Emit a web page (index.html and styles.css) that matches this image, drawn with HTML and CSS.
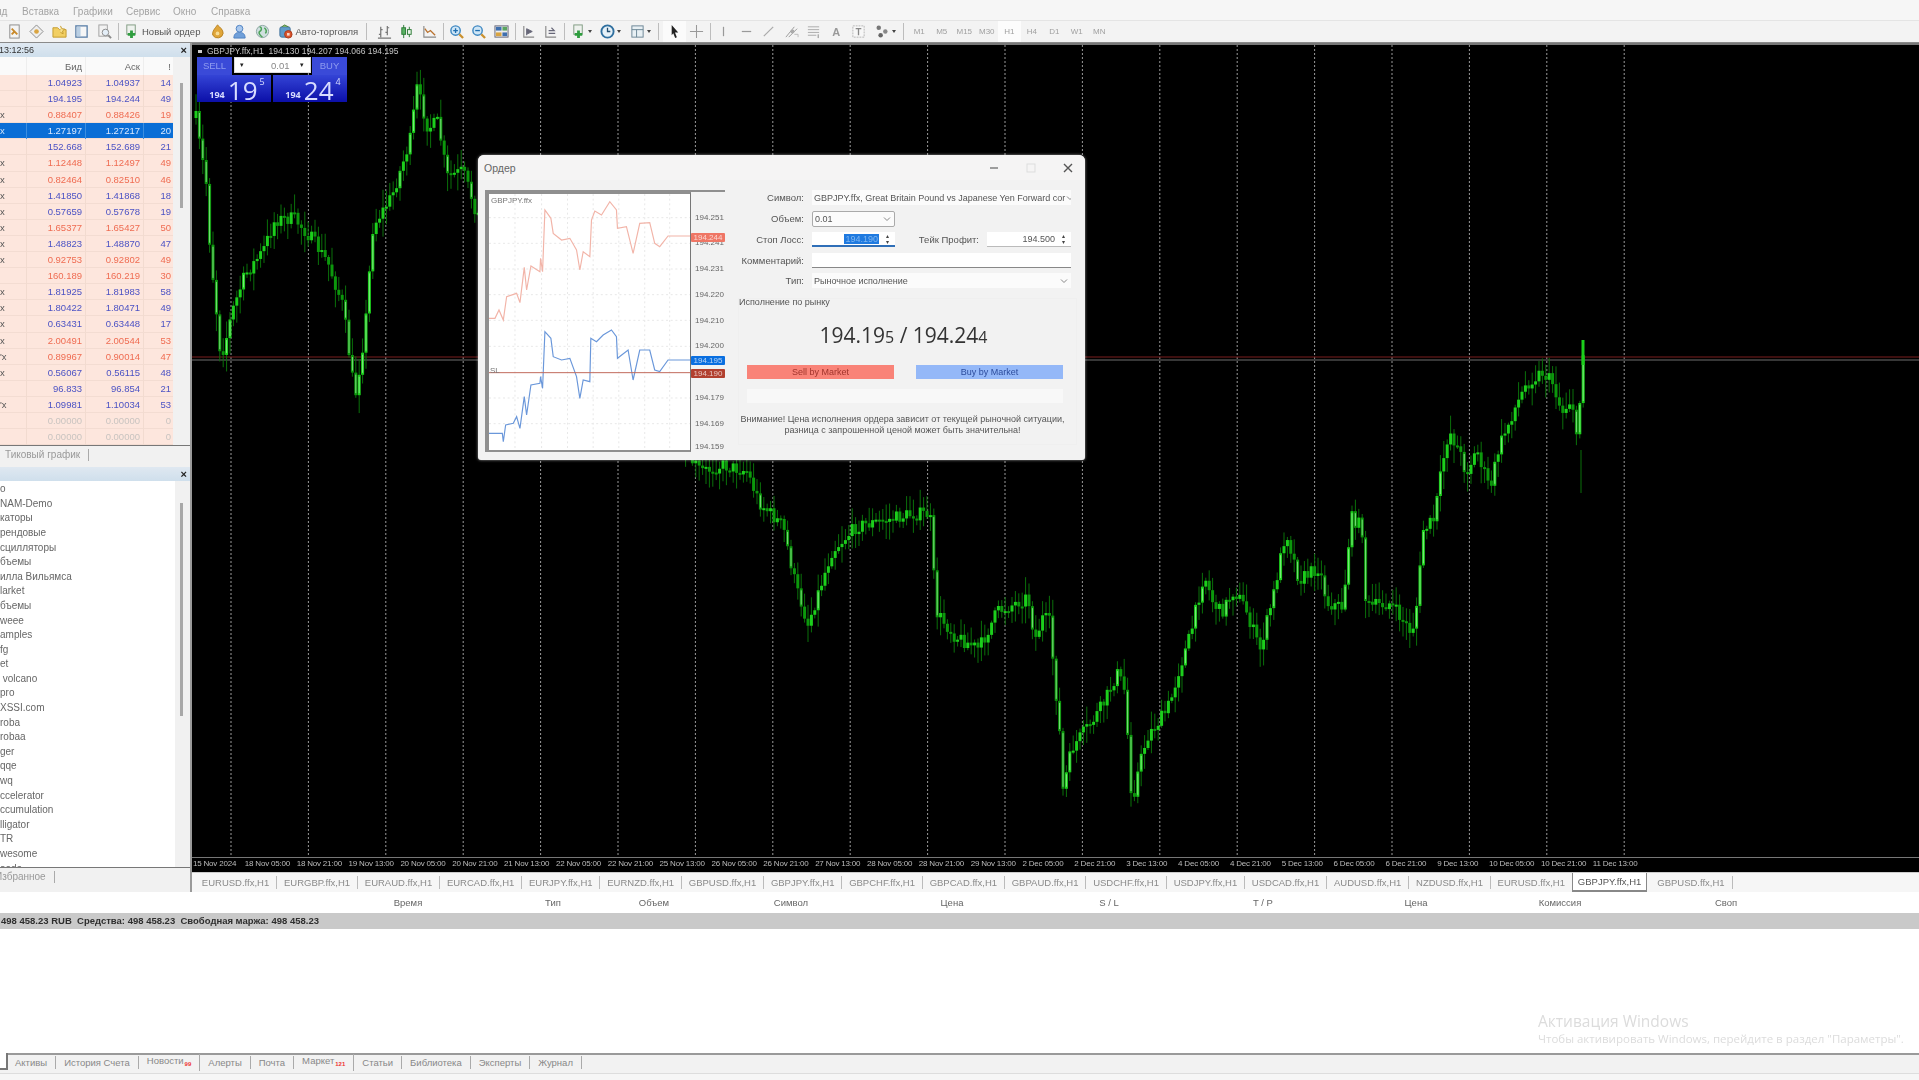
FILE: index.html
```html
<!DOCTYPE html>
<html>
<head>
    <title>MetaTrader 5</title>
    <meta charset="utf-8">
    <link rel="stylesheet" href="styles.css">
</head>
<body>
<div class="app">

<div class="menu">
    <span class="m0">ид</span><span class="m1">Вставка</span><span class="m2">Графики</span><span class="m3">Сервис</span><span class="m4">Окно</span><span class="m5">Справка</span>
</div>

<div class="toolbar">
    <div class="btn"><svg viewBox="0 0 16 16"><rect x="3" y="1" width="10" height="14" fill="#f4f4f4" stroke="#8a8a8a"/><path d="M5 5l6 6M5 11l3-3" stroke="#c98a2b" stroke-width="2"/></svg></div>
    <div class="btn"><svg viewBox="0 0 16 16"><path d="M8 1l7 7-7 7-7-7z" fill="#eee" stroke="#8a8a8a"/><circle cx="8" cy="8" r="2.5" fill="#d9a441"/></svg></div>
    <div class="btn"><svg viewBox="0 0 16 16"><path d="M1 4h5l2 2h7v8H1z" fill="#f2cf63" stroke="#c39a2c"/><path d="M9 2l1.5 3 3 .4-2.2 2 .6 3-2.9-1.5" fill="#f7e08e" stroke="#c39a2c"/></svg></div>
    <div class="btn"><svg viewBox="0 0 16 16"><rect x="2" y="2" width="12" height="12" fill="#f6f6f6" stroke="#5a7fa8" stroke-width="1.4"/><rect x="3" y="3" width="4" height="10" fill="#b9cfe4"/></svg></div>
    <div class="btn"><svg viewBox="0 0 16 16"><rect x="2" y="1" width="9" height="12" fill="#f2f2f2" stroke="#a0a0a0"/><circle cx="9" cy="9" r="3.5" fill="#e4eef7" stroke="#8a8a8a"/><path d="M12 12l3 3" stroke="#8a8a8a" stroke-width="2"/></svg></div>
    <div class="sep thin"></div>
    <div class="btn wide neworder"><svg viewBox="0 0 16 16"><rect x="3" y="1" width="9" height="10" fill="#eef2ee" stroke="#7f9a80"/><path d="M8 7v8M4 11h8" stroke="#2f9e3f" stroke-width="3"/></svg><span>Новый ордер</span></div>
    <div class="btn"><svg viewBox="0 0 16 16"><path d="M8 1c3 3 6 5 6 9a6 6 0 0 1-11 2C2 8 5 5 8 1z" fill="#e0a63a" stroke="#b57f1e"/><circle cx="8" cy="10" r="2" fill="#f6dc95"/></svg></div>
    <div class="btn"><svg viewBox="0 0 16 16"><circle cx="8" cy="5" r="3.6" fill="#a9c8ee" stroke="#4c7fc0"/><path d="M2 15c0-5 3-6 6-6s6 1 6 6z" fill="#6f9fd9" stroke="#4c7fc0"/></svg></div>
    <div class="btn"><svg viewBox="0 0 16 16"><circle cx="8" cy="8" r="6.5" fill="#cfe0df" stroke="#8aa3a0"/><path d="M5 3c3 1 2 4 0 5s1 5 3 6M10 4c2 2 3 4 1 6" fill="none" stroke="#4ea35a" stroke-width="1.6"/></svg></div>
    <div class="btn wide auto"><svg viewBox="0 0 16 16"><rect x="2" y="3" width="11" height="11" rx="2" fill="#5f9bc9" stroke="#3e6f99"/><path d="M4 3l3-2 4 2" fill="#78b05c" stroke="#4d7f3a"/><circle cx="11" cy="11" r="4" fill="#d9532c" stroke="#a83a1a"/><rect x="9.6" y="9.6" width="2.8" height="2.8" fill="#f6d5c8"/></svg><span>Авто-торговля</span></div>
    <div class="sep big"></div>
    <div class="btn"><svg viewBox="0 0 16 16"><path d="M4 3v11M2 11h2M4 6h2M11 2v10M9 9h2M11 4h2M1 15h14" fill="none" stroke="#777" stroke-width="1.3"/></svg></div>
    <div class="btn"><svg viewBox="0 0 16 16"><path d="M5 1v14M11 3v11" stroke="#2b7a35"/><rect x="3" y="4" width="4" height="7" fill="#58b163" stroke="#2b7a35"/><rect x="9" y="6" width="4" height="5" fill="#e8f4e8" stroke="#2b7a35"/></svg></div>
    <div class="btn"><svg viewBox="0 0 16 16"><path d="M2 2v12h13" fill="none" stroke="#888" stroke-width="1.2"/><path d="M3 5l3 4 3-2 5 5" fill="none" stroke="#b9722f" stroke-width="1.4"/></svg></div>
    <div class="sep thin"></div>
    <div class="btn"><svg viewBox="0 0 16 16"><circle cx="7" cy="7" r="5" fill="#cfe6f6" stroke="#3c86c0" stroke-width="1.5"/><path d="M4.5 7h5M7 4.5v5" stroke="#1f6eb0" stroke-width="1.4"/><path d="M11 11l4 4" stroke="#c9902e" stroke-width="2.4"/></svg></div>
    <div class="btn"><svg viewBox="0 0 16 16"><circle cx="7" cy="7" r="5" fill="#cfe6f6" stroke="#3c86c0" stroke-width="1.5"/><path d="M4.5 7h5" stroke="#1f6eb0" stroke-width="1.4"/><path d="M11 11l4 4" stroke="#c9902e" stroke-width="2.4"/></svg></div>
    <div class="btn"><svg viewBox="0 0 16 16"><rect x="1" y="2" width="14" height="12" fill="#eee" stroke="#667"/><rect x="2" y="3" width="6" height="4" fill="#3f6fae"/><rect x="9" y="3" width="5" height="4" fill="#5aa45f"/><rect x="2" y="9" width="6" height="4" fill="#d9a441"/><rect x="9" y="9" width="5" height="4" fill="#3f6fae"/></svg></div>
    <div class="sep thin"></div>
    <div class="btn"><svg viewBox="0 0 16 16"><path d="M3 2v12h11" fill="none" stroke="#888" stroke-width="1.2"/><path d="M6 5v7M6 5l6 3-6 3" fill="#667" stroke="#667"/></svg></div>
    <div class="btn"><svg viewBox="0 0 16 16"><path d="M3 2v12h11" fill="none" stroke="#888" stroke-width="1.2"/><path d="M6 7h5M6 10h7M9 4l3 3-3 0" fill="none" stroke="#667" stroke-width="1.2"/></svg></div>
    <div class="sep thin wider"></div>
    <div class="btn drop first"><svg viewBox="0 0 16 16"><rect x="3" y="1" width="9" height="10" fill="#eef2ee" stroke="#7f9a80"/><path d="M8 7v8M4 11h8" stroke="#2f9e3f" stroke-width="3"/></svg><i></i></div>
    <div class="btn drop"><svg viewBox="0 0 16 16"><circle cx="8" cy="8" r="6.5" fill="#e6f1f8" stroke="#2f6f9f" stroke-width="2"/><path d="M8 4v4h3" fill="none" stroke="#224e70" stroke-width="1.4"/></svg><i></i></div>
    <div class="btn drop"><svg viewBox="0 0 16 16"><rect x="2" y="2" width="12" height="12" fill="#e8f0f4" stroke="#6a8494"/><path d="M2 6h12M7 6v8" stroke="#6a8494"/></svg><i></i></div>
    <div class="sep"></div>
    <div class="btn on"><svg viewBox="0 0 16 16"><path d="M5 1l7 8H8.5l2 5-1.8.8-2-5L5 12z" fill="#222"/></svg></div>
    <div class="btn"><svg viewBox="0 0 16 16"><path d="M8 1v14M1 8h14" stroke="#999" stroke-width="1.1"/></svg></div>
    <div class="sep thin"></div>
    <div class="btn"><svg viewBox="0 0 16 16"><path d="M8 3v10" stroke="#999" stroke-width="1.3"/></svg></div>
    <div class="btn"><svg viewBox="0 0 16 16"><path d="M3 8h10" stroke="#999" stroke-width="1.3"/></svg></div>
    <div class="btn"><svg viewBox="0 0 16 16"><path d="M3 13L13 3" stroke="#aaa" stroke-width="1.3"/></svg></div>
    <div class="btn"><svg viewBox="0 0 16 16"><path d="M2 14l9-11M5 14l9-9" stroke="#999"/><circle cx="9" cy="8" r="2.2" fill="#aaa"/><path d="M11 11h4v3" stroke="#bbb" fill="none"/></svg></div>
    <div class="btn"><svg viewBox="0 0 16 16"><path d="M2 3h12M2 6h12M2 9h12M2 12h9" stroke="#aaa"/><path d="M13 11v4" stroke="#888"/></svg></div>
    <div class="btn txt">A</div>
    <div class="btn"><svg viewBox="0 0 16 16"><rect x="2" y="2" width="12" height="12" fill="#f7f7f7" stroke="#b5b5b5" stroke-dasharray="2 1"/><path d="M5 5h6M8 5v7" stroke="#888" stroke-width="1.4"/></svg></div>
    <div class="btn drop"><svg viewBox="0 0 16 16"><circle cx="4" cy="4" r="2.4" fill="#777"/><circle cx="11" cy="8" r="2.4" fill="#888"/><circle cx="6" cy="12" r="2.4" fill="#666"/></svg><i></i></div>
    <div class="sep"></div>
    <div class="tf">M1</div><div class="tf">M5</div><div class="tf">M15</div><div class="tf">M30</div><div class="tf on">H1</div><div class="tf">H4</div><div class="tf">D1</div><div class="tf">W1</div><div class="tf">MN</div>
</div>

<div class="main">
    <div class="side">
        <div class="panel-head"><span>13:12:56</span><b>×</b></div>
        <div class="watch">
            <div class="watch-row head"><span></span><span>Бид</span><span>Аск</span><span>!</span></div>
            <div class="watch-row blue"><span></span><span>1.04923</span><span>1.04937</span><span>14</span></div>
            <div class="watch-row blue"><span></span><span>194.195</span><span>194.244</span><span>49</span></div>
            <div class="watch-row red"><span>x</span><span>0.88407</span><span>0.88426</span><span>19</span></div>
            <div class="watch-row sel"><span>x</span><span>1.27197</span><span>1.27217</span><span>20</span></div>
            <div class="watch-row blue"><span></span><span>152.668</span><span>152.689</span><span>21</span></div>
            <div class="watch-row red"><span>x</span><span>1.12448</span><span>1.12497</span><span>49</span></div>
            <div class="watch-row red"><span>x</span><span>0.82464</span><span>0.82510</span><span>46</span></div>
            <div class="watch-row blue"><span>x</span><span>1.41850</span><span>1.41868</span><span>18</span></div>
            <div class="watch-row blue"><span>x</span><span>0.57659</span><span>0.57678</span><span>19</span></div>
            <div class="watch-row red"><span>x</span><span>1.65377</span><span>1.65427</span><span>50</span></div>
            <div class="watch-row blue"><span>x</span><span>1.48823</span><span>1.48870</span><span>47</span></div>
            <div class="watch-row red"><span>x</span><span>0.92753</span><span>0.92802</span><span>49</span></div>
            <div class="watch-row red"><span></span><span>160.189</span><span>160.219</span><span>30</span></div>
            <div class="watch-row blue"><span>x</span><span>1.81925</span><span>1.81983</span><span>58</span></div>
            <div class="watch-row blue"><span>x</span><span>1.80422</span><span>1.80471</span><span>49</span></div>
            <div class="watch-row blue"><span>x</span><span>0.63431</span><span>0.63448</span><span>17</span></div>
            <div class="watch-row red"><span>x</span><span>2.00491</span><span>2.00544</span><span>53</span></div>
            <div class="watch-row red"><span>'x</span><span>0.89967</span><span>0.90014</span><span>47</span></div>
            <div class="watch-row blue"><span>x</span><span>0.56067</span><span>0.56115</span><span>48</span></div>
            <div class="watch-row blue"><span></span><span>96.833</span><span>96.854</span><span>21</span></div>
            <div class="watch-row blue"><span>'x</span><span>1.09981</span><span>1.10034</span><span>53</span></div>
            <div class="watch-row none"><span></span><span>0.00000</span><span>0.00000</span><span>0</span></div>
            <div class="watch-row none"><span></span><span>0.00000</span><span>0.00000</span><span>0</span></div>
            <div class="watch-scroll"></div>
        </div>
        <div class="side-tabs"><span>Тиковый график</span></div>

        <div class="panel-head nav-head"><span></span><b>×</b></div>
        <div class="nav-wrap">
            <div class="nav-list">
                <div>o</div><div>NAM-Demo</div><div>каторы</div><div>рендовые</div><div>сцилляторы</div><div>бъемы</div><div>илла Вильямса</div><div>larket</div><div>бъемы</div><div>weee</div><div>amples</div><div>fg</div><div>et</div><div>&nbsp;volcano</div><div>pro</div><div>XSSI.com</div><div>roba</div><div>robaa</div><div>ger</div><div>qqe</div><div>wq</div><div>ccelerator</div><div>ccumulation</div><div>lligator</div><div>TR</div><div>wesome</div><div>aods</div>
            </div>
            <div class="nav-scroll"></div>
        </div>
        <div class="side-tabs low"><span>Избранное</span></div>
    </div>

    <div class="work">
        <div class="chart">
            <svg id="candles" class="chart-svg" viewBox="192 45 1727 812" preserveAspectRatio="none"></svg>
            <div class="chart-info">GBPJPY.ffx,H1&nbsp; 194.130 194.207 194.066 194.195</div>

            <div class="oneclick">
                <div class="oc-top">
                    <div class="oc-btn sell">SELL</div>
                    <div class="oc-vol"><i>▾</i><span>0.01</span><i>▾</i></div>
                    <div class="oc-btn buy">BUY</div>
                </div>
                <div class="oc-prices">
                    <div class="oc-price"><small>194</small><big>19</big><sup>5</sup></div>
                    <div class="oc-price"><small>194</small><big>24</big><sup>4</sup></div>
                </div>
            </div>

            <div class="axis">
                <span>15 Nov 2024</span><span>18 Nov 05:00</span><span>18 Nov 21:00</span><span>19 Nov 13:00</span><span>20 Nov 05:00</span><span>20 Nov 21:00</span><span>21 Nov 13:00</span><span>22 Nov 05:00</span><span>22 Nov 21:00</span><span>25 Nov 13:00</span><span>26 Nov 05:00</span><span>26 Nov 21:00</span><span>27 Nov 13:00</span><span>28 Nov 05:00</span><span>28 Nov 21:00</span><span>29 Nov 13:00</span><span>2 Dec 05:00</span><span>2 Dec 21:00</span><span>3 Dec 13:00</span><span>4 Dec 05:00</span><span>4 Dec 21:00</span><span>5 Dec 13:00</span><span>6 Dec 05:00</span><span>6 Dec 21:00</span><span>9 Dec 13:00</span><span>10 Dec 05:00</span><span>10 Dec 21:00</span><span>11 Dec 13:00</span>
            </div>

            <div class="dialog">
                <div class="dlg-title">
                    <span>Ордер</span>
                    <div class="dlg-ctrl">
                        <svg viewBox="0 0 12 12"><path d="M2 6h8" stroke="#777" stroke-width="1.4"/></svg>
                        <svg viewBox="0 0 12 12"><rect x="2" y="2" width="8" height="8" fill="none" stroke="#ddd"/></svg>
                        <svg viewBox="0 0 12 12"><path d="M2 2l8 8M10 2l-8 8" stroke="#555" stroke-width="1.4"/></svg>
                    </div>
                </div>
                <div class="dlg-body">
                    <div class="mini">
                        <div class="mini-frame">
                            <svg viewBox="42 132 604 768" preserveAspectRatio="none">
                                <path class="mini-grid" d="M120 132v768M200 132v768M278 132v768M355 132v768M432 132v768M510 132v768M585 132v768M42 203h604M42 280h604M42 357h604M42 434h604M42 511h604M42 589h604M42 744h604M42 821h604"/>
                                <polyline class="mini-ask" points="42,505 60,505 72,480 85,510 95,440 125,430 135,458 148,352 155,420 168,348 195,365 197,325 203,365 210,180 228,205 235,250 260,270 285,265 305,300 315,360 325,305 345,320 350,210 360,183 380,195 405,155 425,180 428,235 455,230 475,310 495,220 525,218 540,280 555,290 580,258 648,258"/>
                                <polyline class="mini-bid" points="40,850 82,850 85,875 92,825 115,820 125,800 135,835 148,740 155,795 168,705 195,700 197,680 203,715 210,545 228,565 235,620 260,630 285,625 305,680 315,745 325,690 345,695 348,565 365,575 385,555 410,540 425,560 428,625 460,600 475,690 495,600 525,600 540,660 555,665 580,630 648,630"/>
                                <path class="mini-sl" d="M42 668h604"/>
                            </svg>
                            <span class="mini-name">GBPJPY.ffx</span>
                            <span class="mini-sl-label">SL</span>
                        </div>
                        <div class="mini-scale">
                            <span style="top:26px">194.251</span>
                            <span style="top:51px">194.241</span>
                            <span style="top:77px">194.231</span>
                            <span style="top:103px">194.220</span>
                            <span style="top:129px">194.210</span>
                            <span style="top:154px">194.200</span>
                            <span style="top:206px">194.179</span>
                            <span style="top:232px">194.169</span>
                            <span style="top:255px">194.159</span>
                            <span class="tag ask" style="top:45px">194.244</span>
                            <span class="tag bid" style="top:168px">194.195</span>
                            <span class="tag stop" style="top:181px">194.190</span>
                        </div>
                    </div>

                    <div class="order">
                        <div class="fields">
                            <label>Символ:</label>
                            <div class="field flat span3"><span>GBPJPY.ffx, Great Britain Pound vs Japanese Yen Forward cor</span><svg viewBox="0 0 10 10"><path d="M2 3.5l3 3 3-3" fill="none" stroke="#888"/></svg></div>
                            <label>Объем:</label>
                            <div class="field boxed"><span>0.01</span><svg viewBox="0 0 10 10"><path d="M2 3.5l3 3 3-3" fill="none" stroke="#888"/></svg></div>
                            <div class="span2"></div>
                            <label>Стоп Лосс:</label>
                            <div class="field focus"><span class="picked">194.190</span><i class="spin">▴<br>▾</i></div>
                            <label>Тейк Профит:</label>
                            <div class="field under"><span class="num">194.500</span><i class="spin">▴<br>▾</i></div>
                            <label>Комментарий:</label>
                            <div class="field under span3 dark"></div>
                            <label>Тип:</label>
                            <div class="field flat span3"><span>Рыночное исполнение</span><svg viewBox="0 0 10 10"><path d="M2 3.5l3 3 3-3" fill="none" stroke="#888"/></svg></div>
                        </div>

                        <div class="exec">
                            <div class="exec-title">Исполнение по рынку</div>
                            <div class="quote">194.19<small>5</small> / 194.24<small>4</small></div>
                            <div class="exec-btns">
                                <div class="exec-btn sell">Sell by Market</div>
                                <div class="exec-btn buy">Buy by Market</div>
                            </div>
                            <div class="exec-bar"></div>
                            <p>Внимание! Цена исполнения ордера зависит от текущей рыночной ситуации,<br>разница с запрошенной ценой может быть значительна!</p>
                        </div>
                    </div>
                </div>
            </div>
        </div>

        <div class="chart-tabs">
            <span>EURUSD.ffx,H1</span><span>EURGBP.ffx,H1</span><span>EURAUD.ffx,H1</span><span>EURCAD.ffx,H1</span><span>EURJPY.ffx,H1</span><span>EURNZD.ffx,H1</span><span>GBPUSD.ffx,H1</span><span>GBPJPY.ffx,H1</span><span>GBPCHF.ffx,H1</span><span>GBPCAD.ffx,H1</span><span>GBPAUD.ffx,H1</span><span>USDCHF.ffx,H1</span><span>USDJPY.ffx,H1</span><span>USDCAD.ffx,H1</span><span>AUDUSD.ffx,H1</span><span>NZDUSD.ffx,H1</span><span>EURUSD.ffx,H1</span><span class="on">GBPJPY.ffx,H1</span><span>GBPUSD.ffx,H1</span>
        </div>
    </div>
</div>

<div class="trade-head">
    <span>Время</span><span>Тип</span><span>Объем</span><span>Символ</span><span>Цена</span><span>S / L</span><span>T / P</span><span>Цена</span><span>Комиссия</span><span>Своп</span>
</div>
<div class="balance">498 458.23 RUB&nbsp; Средства: 498 458.23&nbsp; Свободная маржа: 498 458.23</div>

<div class="blank">
    <div class="activate">
        <div class="a1">Активация Windows</div>
        <div class="a2">Чтобы активировать Windows, перейдите в раздел "Параметры".</div>
    </div>
</div>

<div class="box-tabs">
    <span>Активы</span><span>История Счета</span><span>Новости<em>99</em></span><span>Алерты</span><span>Почта</span><span>Маркет<em>121</em></span><span>Статьи</span><span>Библиотека</span><span>Эксперты</span><span>Журнал</span>
</div>
<div class="statusbar"></div>

</div>
<script src="chart.js"></script>
</body>
</html>
```

FILE: styles.css
```css
* {
    box-sizing: border-box;
}

html, body {
    margin: 0;
    height: 100%;
    overflow: hidden;
    background: #fff;
}

body {
    font-family: "Liberation Sans", sans-serif;
    font-size: 10px;
    color: #555;
}

/* the source is a soft video frame */
.app {
    width: 1919px;
    height: 1080px;
    display: flex;
    flex-direction: column;
    filter: blur(0.55px);
}

/* menu + toolbar */
.menu {
    height: 20px;
    flex: none;
    display: flex;
    align-items: center;
    background: #f6f6f6;
    color: #a4a4a4;
    font-size: 10px;
    padding-top: 2px;
}
.menu .m0 { width: 26px; margin-left: -4px; }
.menu .m1 { width: 51px; }
.menu .m2 { width: 53px; }
.menu .m3 { width: 47px; }
.menu .m4 { width: 38px; }

.toolbar {
    height: 22px;
    flex: none;
    display: flex;
    align-items: center;
    padding-left: 3px;
    background: #f3f3f3;
    border-top: 1px solid #e4e4e4;
}
.btn {
    width: 22.5px;
    height: 21px;
    flex: none;
    display: flex;
    align-items: center;
    justify-content: center;
}
.btn svg {
    width: 15px;
    height: 15px;
    flex: none;
}
.btn.on {
    background: #fbfbfb;
}
.btn.wide {
    justify-content: flex-start;
    padding-left: 4px;
    gap: 3px;
    color: #555;
    font-size: 9.5px;
}
.btn.neworder { width: 86px; }
.btn.auto { width: 89px; }
.btn.txt {
    color: #999;
    font-size: 11px;
    font-weight: bold;
}
.btn.drop {
    width: 30px;
    gap: 2px;
}
.btn.drop.first {
    width: 26.5px;
}
.btn.drop i {
    border-left: 2px solid transparent;
    border-right: 2px solid transparent;
    border-top: 3px solid #444;
}
.sep {
    width: 8px;
    height: 19px;
    flex: none;
    position: relative;
}
.sep:after {
    content: "";
    position: absolute;
    left: 3px;
    top: 1px;
    bottom: 1px;
    width: 1px;
    background: #bdbdbd;
}
.sep.big { width: 10.5px; }
.sep.thin { width: 4.5px; }
.sep.thin.wider { width: 6.5px; }
.sep.thin:after { left: 2px; }
.tf {
    width: 22.5px;
    height: 21px;
    flex: none;
    display: flex;
    align-items: center;
    justify-content: center;
    color: #a0a0a0;
    font-size: 8px;
}
.tf.on {
    background: #fcfcfc;
}

/* upper body */
.main {
    height: 850px;
    flex: none;
    display: flex;
    border-top: 1px solid #8a8a8a;
}

.side {
    width: 192px;
    flex: none;
    height: 850px;
    background: #f1f1f1;
    display: flex;
    flex-direction: column;
    border-right: 2px solid #9a9a9a;
}
.panel-head {
    height: 14px;
    flex: none;
    display: flex;
    justify-content: space-between;
    align-items: center;
    background: linear-gradient(#dfe8f1, #cfdfec);
    color: #333;
    font-size: 9px;
    padding-right: 3px;
}
.panel-head span {
    margin-left: -1px;
}
.panel-head b {
    color: #222;
    font-size: 11px;
}

.watch {
    flex: none;
    position: relative;
}
.watch-row {
    width: 173px;
    height: 16.1px;
    display: grid;
    grid-template-columns: 27px 59px 58px 29px;
    background: #fde6dd;
    font-size: 9.5px;
    line-height: 16px;
    border-bottom: 1px solid #f3dcd2;
}
.watch-row span {
    text-align: right;
    padding-right: 3px;
    border-right: 1px solid #f2dbd0;
}
.watch-row span:first-child {
    text-align: left;
    padding: 0;
    color: #555;
}
.watch-row span:last-child {
    border-right: 0;
    padding-right: 2px;
}
.watch-row.head {
    height: 18px;
    background: #fafafa;
    color: #666;
    line-height: 20px;
    border-bottom: 0;
}
.watch-row.head span {
    border-right-color: #eee;
}
.watch-row.blue { color: #4b52c4; }
.watch-row.red { color: #ef6c52; }
.watch-row.none { color: #c9c4c0; }
.watch-row.sel {
    background: #0a6ed6;
    color: #d8e8ff;
}
.watch-row.sel span {
    border-right-color: #3d8fe0;
}
.watch-row.sel span:first-child { color: #cfe2f8; }
.watch-scroll {
    position: absolute;
    left: 180px;
    top: 26px;
    width: 3px;
    height: 125px;
    background: #a8a8a8;
}

.side-tabs {
    height: 20px;
    flex: none;
    border-top: 1px solid #777;
    color: #999;
    font-size: 10px;
    line-height: 17px;
    padding-left: 5px;
}
.side-tabs span {
    display: inline-block;
    line-height: 12px;
    padding-right: 8px;
    border-right: 1px solid #aaa;
}
.side-tabs.low {
    height: 22px;
    padding-left: 0;
    margin-left: -5px;
}
.nav-head {
    margin-top: 2px;
}
.nav-wrap {
    height: 386px;
    flex: none;
    position: relative;
}
.nav-list {
    height: 386px;
    width: 175px;
    overflow: hidden;
    background: #fff;
    color: #666;
    font-size: 10px;
}
.nav-list div {
    height: 14.6px;
    line-height: 15px;
    white-space: pre;
}
.nav-scroll {
    position: absolute;
    left: 180px;
    top: 22px;
    width: 3px;
    height: 213px;
    background: #a8a8a8;
}

/* chart */
.work {
    flex: 1;
    min-width: 0;
    display: flex;
    flex-direction: column;
}
.chart {
    height: 829px;
    flex: none;
    position: relative;
    background: #000;
    border-top: 2px solid #777;
}
.chart-svg {
    display: block;
    width: 100%;
    height: 812px;
}
.chart-info {
    position: absolute;
    left: 15px;
    top: 1px;
    color: #c4c4c4;
    font-size: 8.5px;
    line-height: 10px;
}
.chart-info:before {
    content: "";
    position: absolute;
    left: -9px;
    top: 4px;
    width: 4px;
    height: 3px;
    background: #ccc;
}

.oneclick {
    position: absolute;
    left: 5px;
    top: 12px;
    width: 150px;
    height: 45px;
}
.oc-top {
    height: 18px;
    display: flex;
    justify-content: space-between;
}
.oc-btn {
    width: 35px;
    height: 18px;
    background: #3a4ad8;
    color: #8f9cf0;
    text-align: center;
    font-size: 9.5px;
    line-height: 17px;
}
.oc-vol {
    width: 77px;
    height: 16px;
    background: #fff;
    color: #888;
    display: flex;
    justify-content: space-between;
    align-items: center;
    font-size: 9.5px;
    border: 1px solid #ddd;
}
.oc-vol i {
    width: 15px;
    text-align: center;
    font-style: normal;
    color: #222;
    font-size: 7px;
}
.oc-vol span {
    flex: 1;
    text-align: right;
    padding-right: 5px;
}
.oc-prices {
    height: 27px;
    display: flex;
    justify-content: space-between;
}
.oc-price {
    height: 27px;
    background: linear-gradient(#3444d6, #0b0fa8);
    color: #d8dcff;
    display: flex;
    align-items: flex-end;
    justify-content: center;
    width: 74px;
    padding-left: 6px;
    line-height: 1;
    font-family: "Open Sans", "Liberation Sans", sans-serif;
}
.oc-price small {
    font-size: 9px;
    font-weight: bold;
    margin-right: 3px;
    margin-bottom: 3px;
}
.oc-price big {
    font-size: 26px;
    margin-bottom: -1px;
}
.oc-price sup {
    font-size: 9px;
    align-self: flex-start;
    margin: 2px 0 0 2px;
}

.axis {
    height: 15px;
    display: flex;
    color: #bcbcbc;
    font-size: 8px;
    line-height: 12px;
    padding-left: 1px;
    border-top: 1px solid #777;
    letter-spacing: -0.2px;
}
.axis span {
    width: 51.85px;
    flex: none;
    white-space: nowrap;
}

.dialog {
    position: absolute;
    left: 286px;
    top: 110px;
    width: 607px;
    height: 305px;
    background: #f2f2f2;
    border-radius: 6px 6px 3px 3px;
    box-shadow: 0 0 3px rgba(255, 255, 255, 0.6);
    display: flex;
    flex-direction: column;
}
.dlg-title {
    height: 25px;
    flex: none;
    display: flex;
    justify-content: space-between;
    align-items: center;
    background: #f5f4f4;
    color: #666;
    font-size: 10.5px;
    padding-left: 6px;
    border-radius: 6px 6px 0 0;
}
.dlg-ctrl {
    display: flex;
    gap: 25px;
    margin-right: 11px;
}
.dlg-ctrl svg {
    width: 12px;
    height: 12px;
}
.dlg-body {
    flex: 1;
    display: flex;
    padding: 8px 0 0 7px;
}
.mini {
    width: 240px;
    flex: none;
    height: 262px;
    margin-top: 2px;
    display: flex;
    border-top: 2px solid #8f8f8f;
}
.mini-frame {
    width: 206px;
    height: 260px;
    flex: none;
    position: relative;
    background: #fff;
    border-left: 4px solid #8f8f8f;
    border-right: 1px solid #777;
    border-bottom: 2px solid #8f8f8f;
    border-top: 2px solid #8f8f8f;
}
.mini-frame svg {
    display: block;
    width: 100%;
    height: 100%;
}
.mini-grid {
    fill: none;
    stroke: #e8e8e8;
    stroke-width: 3;
    stroke-dasharray: 6 8;
}
.mini-ask {
    fill: none;
    stroke: #f2b4a8;
    stroke-width: 3.5;
}
.mini-bid {
    fill: none;
    stroke: #6a97da;
    stroke-width: 3.5;
}
.mini-sl {
    fill: none;
    stroke: #c26a5c;
    stroke-width: 3;
}
.mini-name {
    position: absolute;
    left: 2px;
    top: 2px;
    font-size: 8px;
    color: #777;
}
.mini-sl-label {
    position: absolute;
    left: 1px;
    top: 172px;
    font-size: 8px;
    color: #777;
}
.mini-scale {
    position: relative;
    flex: 1;
    font-size: 8px;
    color: #666;
}
.mini-scale span {
    position: absolute;
    left: 4px;
    line-height: 10px;
    transform: translateY(-5px);
}
.mini-scale .tag {
    left: 0;
    width: 34px;
    height: 9px;
    line-height: 9px;
    text-align: center;
    color: rgba(255, 255, 255, 0.7);
    border-radius: 1px;
    transform: translateY(-4px);
}
.tag.ask { background: #ef7665; }
.tag.bid { background: #0a6fe0; }
.tag.stop { background: #b2402f; }

.order {
    flex: 1;
    min-width: 0;
    margin-left: 5px;
}
.fields {
    display: grid;
    grid-template-columns: 74px 83px 76px 84px;
    grid-template-rows: 15px 16px 15px 15px 15px;
    column-gap: 8px;
    row-gap: 5.5px;
    align-items: stretch;
    margin-top: 2px;
}
.fields label {
    text-align: right;
    font-size: 9.5px;
    line-height: 15px;
    color: #555;
    white-space: nowrap;
}
.span3 { grid-column: span 3; }
.span2 { grid-column: span 2; }
.field {
    display: flex;
    align-items: center;
    justify-content: space-between;
    padding: 0 2px;
    background: #fbfbfb;
    color: #555;
    font-size: 9px;
    white-space: nowrap;
    overflow: hidden;
    min-width: 0;
}
.field svg {
    width: 10px;
    height: 10px;
    flex: none;
}
.field.boxed {
    border: 1px solid #aaa;
    border-radius: 2px;
}
.field.under {
    background: #fff;
    border-bottom: 1px solid #bbb;
}
.field.under.dark {
    border-bottom-color: #888;
}
.field.focus {
    background: #fff;
    border-bottom: 2px solid #2f6fb8;
    justify-content: flex-end;
}
.picked {
    background: #1f7ae0;
    color: #7fb6f0;
    padding: 0 1px;
    margin-right: 3px;
}
.num {
    flex: 1;
    text-align: right;
    padding-right: 3px;
}
.spin {
    width: 11px;
    font-style: normal;
    font-size: 6px;
    line-height: 6px;
    text-align: center;
    color: #444;
    flex: none;
}
.exec {
    margin: 10px 8px 0 8px;
    position: relative;
    height: 147px;
    border: 1px solid #efefef;
}
.exec-title {
    font-size: 9px;
    color: #555;
    line-height: 10px;
    margin-top: -2px;
}
.quote {
    text-align: center;
    font-family: "Open Sans", "Liberation Sans", sans-serif;
    font-size: 21px;
    line-height: 28px;
    margin-top: 14px;
    color: #333;
    margin-left: -8px;
}
.quote small {
    font-size: 16px;
}
.exec-btns {
    display: flex;
    justify-content: space-between;
    margin: 14px 13px 0 8px;
}
.exec-btn {
    width: 147px;
    height: 14px;
    text-align: center;
    font-size: 9px;
    line-height: 14px;
}
.exec-btn.sell {
    background: #f98378;
    color: #a1342c;
}
.exec-btn.buy {
    background: #94b8f8;
    color: #2c4c9c;
}
.exec-bar {
    height: 14px;
    margin: 10px 13px 0 8px;
    background: #f8f8f8;
}
.exec p {
    margin: 11px 0 0 -10px;
    text-align: center;
    font-size: 9px;
    line-height: 11px;
    color: #555;
    white-space: nowrap;
}

.chart-tabs {
    height: 20px;
    flex: none;
    display: flex;
    align-items: center;
    padding-left: 3px;
    background: #f6f6f6;
    border-top: 1px solid #ccc;
    color: #8a8a8a;
    font-size: 9.5px;
}
.chart-tabs span {
    flex: none;
    padding: 0 6.85px;
    line-height: 13px;
    text-align: center;
    border-right: 1px solid #bbb;
}
.chart-tabs .on {
    color: #555;
    background: #fff;
    line-height: 17px;
    border: 1px solid #888;
    border-top: 0;
    border-bottom-width: 2px;
    padding: 0 5px;
    margin: 0 3px 0 -1px;
}

/* trade box */
.trade-head {
    height: 21px;
    flex: none;
    display: grid;
    grid-template-columns: 216px 74px 128px 146px 176px 138px 170px 136px 152px 180px;
    padding-left: 300px;
    color: #666;
    font-size: 9.5px;
    line-height: 21px;
    text-align: center;
    background: #fff;
}
.balance {
    height: 16px;
    flex: none;
    background: #c9c9c9;
    color: #2e2e2e;
    font-size: 9.5px;
    font-weight: bold;
    line-height: 16px;
    padding-left: 1px;
}
.blank {
    flex: 1;
    min-height: 0;
    background: #fff;
    display: flex;
    justify-content: flex-end;
    padding-top: 82px;
}
.activate {
    width: 381px;
    color: #dcdcdc;
}
.a1 {
    font-family: "Open Sans", sans-serif;
    font-size: 15.5px;
    line-height: 20px;
}
.a2 {
    font-family: "Open Sans", sans-serif;
    font-size: 11.5px;
    line-height: 16px;
    white-space: nowrap;
}
.box-tabs {
    height: 21px;
    flex: none;
    display: flex;
    align-items: center;
    padding: 0 0 3px 7px;
    background: #f2f2f2;
    border-top: 2px solid #9a9a9a;
    border-bottom: 1px solid #ddd;
    color: #888;
    font-size: 9.5px;
    position: relative;
}
.box-tabs:before {
    content: "";
    position: absolute;
    left: -2px;
    top: -2px;
    width: 8px;
    height: 15px;
    background: #fff;
    border-right: 2px solid #777;
    border-bottom: 2px solid #777;
}
.box-tabs span {
    line-height: 13px;
    padding: 0 8px;
    border-right: 1px solid #aaa;
}
.box-tabs em {
    font-style: normal;
    font-size: 6px;
    color: #e33;
    font-weight: bold;
    vertical-align: sub;
    margin-left: 1px;
}
.statusbar {
    height: 6px;
    flex: none;
    background: #f6f6f6;
}
```

FILE: chart.js
```js
// candles are generated around a traced close line, in page coordinates
(function () {
    var NS = "http://www.w3.org/2000/svg";
    var svg = document.getElementById("candles");

    var trace = [[194,90],[196,118],[200,147],[206,180],[210,247],[214,287],[220,349],[224,349],[232,312],[245,275],[263,251],[275,220],[294,218],[312,239],[328,263],[343,306],[355,398],[365,330],[373,226],[392,196],[410,141],[417,88],[428,128],[438,122],[447,177],[463,171],[477,214],[700,470],[704,471],[722,465],[747,471],[759,502],[783,526],[796,587],[808,624],[832,551],[857,526],[887,520],[912,514],[930,514],[936,612],[955,636],[979,649],[997,612],[1022,600],[1028,597],[1035,640],[1043,617],[1050,623],[1054,673],[1059,723],[1063,790],[1072,748],[1091,723],[1104,703],[1117,673],[1124,687],[1128,740],[1132,803],[1139,767],[1147,737],[1165,713],[1171,700],[1178,673],[1191,633],[1204,573],[1212,600],[1221,613],[1234,590],[1245,607],[1260,650],[1273,597],[1286,530],[1299,580],[1319,567],[1327,603],[1343,607],[1351,517],[1362,527],[1366,607],[1390,603],[1412,633],[1418,597],[1423,530],[1434,520],[1442,467],[1449,430],[1460,453],[1466,473],[1477,450],[1490,490],[1499,447],[1514,410],[1527,383],[1542,372],[1553,383],[1562,413],[1572,397],[1577,447],[1583,350]];

    var seed = 7;
    function rnd() {
        seed = (seed * 16807) % 2147483647;
        return seed / 2147483647;
    }

    function add(name, attrs) {
        var el = document.createElementNS(NS, name);
        for (var k in attrs) el.setAttribute(k, attrs[k]);
        svg.appendChild(el);
    }

    function priceAt(x) {
        for (var i = 1; i < trace.length; i++) {
            if (x <= trace[i][0]) {
                var a = trace[i - 1], b = trace[i];
                return a[1] + (b[1] - a[1]) * (x - a[0]) / (b[0] - a[0]);
            }
        }
        return trace[trace.length - 1][1];
    }

    // grid
    for (var g = 0; g < 19; g++) {
        var gx = 231 + g * 77.4;
        add("line", {x1: gx, x2: gx, y1: 45, y2: 857, stroke: "#9a9a9a", "stroke-width": 1, "stroke-dasharray": "2 2"});
    }

    // bid and stop lines
    add("line", {x1: 192, x2: 1919, y1: 357, y2: 357, stroke: "#7a1f1f", "stroke-width": 1});
    add("line", {x1: 192, x2: 1919, y1: 360, y2: 360, stroke: "#6f6f6f", "stroke-width": 1});

    // candles
    var prev = priceAt(196);
    for (var x = 196; x < 1584; x += 3.4) {
        var cl = priceAt(x) + (rnd() - 0.5) * 14;
        var hi = Math.min(prev, cl), lo = Math.max(prev, cl);
        add("line", {x1: x, x2: x, y1: hi - 2 - rnd() * 16, y2: lo + 2 + rnd() * 16, stroke: "#0a700a", "stroke-width": 1});
        add("rect", {x: x - 1.5, y: hi, width: 3, height: Math.max(lo - hi, 2), fill: cl < prev ? "#1ccf1c" : "#0c980c"});
        if (lo - hi > 16) {
            add("line", {x1: x, x2: x, y1: hi + 2, y2: lo - 2, stroke: "#9cf09c", "stroke-width": 0.8});
        }
        prev = cl;
    }
    add("line", {x1: 1581, x2: 1581, y1: 450, y2: 493, stroke: "#0a700a", "stroke-width": 1});
    add("line", {x1: 1583, x2: 1583, y1: 340, y2: 365, stroke: "#1ccf1c", "stroke-width": 3});
})();
```
